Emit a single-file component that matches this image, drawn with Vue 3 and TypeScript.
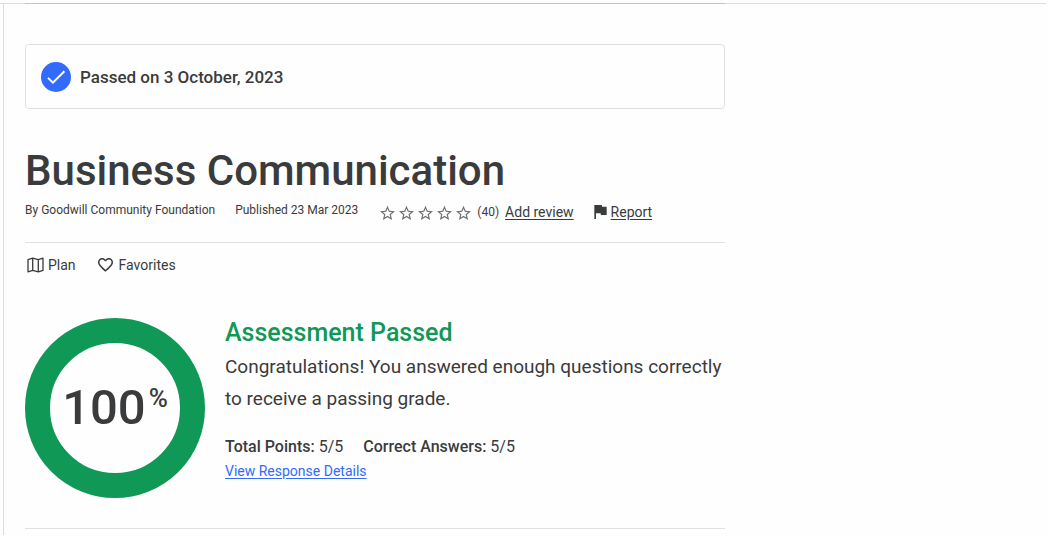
<script setup lang="ts">
interface Stat {
  label: string
  value: string
}

const score = 100
const ratingCount = 40
const stars = [1, 2, 3, 4, 5]
const stats: Stat[] = [
  { label: 'Total Points:', value: '5/5' },
  { label: 'Correct Answers:', value: '5/5' },
]
</script>

<template>
  <div class="page">
    <main class="panel">
      <div class="content">
        <section class="banner">
          <svg class="check" viewBox="0 0 30 30" aria-hidden="true">
            <circle cx="15" cy="15" r="15" fill="#326bfb" />
            <path d="M7 15.9 11.9 20.7 23.4 9.2" fill="none" stroke="#fff" stroke-width="2" />
          </svg>
          <span>Passed on 3 October, 2023</span>
        </section>

        <h1 class="title">Business Communication</h1>

        <div class="meta">
          <span class="small">By Goodwill Community Foundation</span>
          <span class="small">Published 23 Mar 2023</span>
          <div class="rating">
            <div class="stars" role="img" aria-label="Not rated yet">
              <svg v-for="s in stars" :key="s" class="star" viewBox="2 1 20 20" aria-hidden="true">
                <path
                  fill="#707173"
                  d="M22 9.24l-7.19-.62L12 2 9.19 8.63 2 9.24l5.46 4.73L5.82 21 12 17.27 18.18 21l-1.63-7.03L22 9.24zM12 15.4l-3.76 2.27 1-4.28-3.32-2.88 4.38-.38L12 6.1l1.71 4.04 4.38.38-3.32 2.88 1 4.28L12 15.4z"
                />
              </svg>
            </div>
            <span class="count">({{ ratingCount }})</span>
            <a class="link" href="#review">Add review</a>
          </div>
          <div class="report">
            <svg class="flag" viewBox="5 4 15 17" aria-hidden="true">
              <path fill="#3a3b3c" d="M14.4 6 14 4H5v17h2v-7h5.6l.4 2h7V6z" />
            </svg>
            <a class="link" href="#report">Report</a>
          </div>
        </div>

        <div class="actions">
          <button type="button" class="action plan">
            <svg class="map" viewBox="0 0 17 16" aria-hidden="true">
              <path
                d="M1 2.6 5.7 1.2 11.3 2.6 16 1.2V13.4L11.3 14.8 5.7 13.4 1 14.8ZM5.7 1.2V13.4M11.3 2.6V14.8"
                fill="none"
                stroke="#3a3b3c"
                stroke-width="1.3"
                stroke-linejoin="round"
              />
            </svg>
            <span>Plan</span>
          </button>
          <button type="button" class="action favorites">
            <svg class="heart" viewBox="2 3 20 18.4" aria-hidden="true">
              <path
                fill="#3a3b3c"
                d="M16.5 3c-1.74 0-3.41.81-4.5 2.09C10.91 3.81 9.24 3 7.5 3 4.42 3 2 5.42 2 8.5c0 3.78 3.4 6.86 8.55 11.54L12 21.35l1.45-1.32C18.6 15.36 22 12.28 22 8.5 22 5.42 19.58 3 16.5 3zm-4.4 15.55-.1.1-.1-.1C7.14 14.24 4 11.39 4 8.5 4 6.5 5.5 5 7.5 5c1.54 0 3.04.99 3.57 2.36h1.87C13.46 5.99 14.96 5 16.5 5c2 0 3.5 1.5 3.5 3.5 0 2.89-3.14 5.74-7.9 10.05z"
              />
            </svg>
            <span>Favorites</span>
          </button>
        </div>

        <section class="result">
          <div class="ring">
            <span class="score">{{ score }}</span>
            <span class="percent">%</span>
          </div>
          <div class="details">
            <h2 class="heading">Assessment Passed</h2>
            <p class="message">
              Congratulations! You answered enough questions correctly to receive a passing grade.
            </p>
            <div class="stats">
              <span v-for="stat in stats" :key="stat.label">
                <strong>{{ stat.label }}</strong> {{ stat.value }}
              </span>
            </div>
            <a class="response" href="#responses">View Response Details</a>
          </div>
        </section>
      </div>
    </main>
  </div>
</template>

<style>
body {
  margin: 0;
  background: #fefefe;
}
</style>

<style scoped>
.page {
  box-sizing: border-box;
  padding-top: 3px;
  margin-right: 2px;
  color: #3a3b3c;
  font-family: Roboto, "Liberation Sans", sans-serif;
  font-size: 14px;
  line-height: 20px;
}

.page::before {
  content: "";
  display: block;
  height: 1px;
  background: #dcdcdc;
}

.panel {
  margin-left: 3px;
  border-left: 1px solid #dcdcdc;
  padding: 0 21px;
  min-height: calc(100vh - 4px);
  box-sizing: border-box;
}

.content {
  max-width: 700px;
  margin-top: -1px;
  border-top: 1px solid #c4c4c4;
}

.banner {
  display: flex;
  align-items: center;
  gap: 9px;
  margin-top: 40px;
  padding: 17px 15px 16px;
  border: 1px solid #e0e0e0;
  border-radius: 4px;
  font-size: 17px;
  font-weight: 500;
}

.check {
  width: 30px;
  height: 30px;
}

.title {
  margin: 37px 0 0;
  font-size: 42px;
  line-height: 50px;
  font-weight: 500;
}

.meta {
  display: flex;
  align-items: center;
  gap: 20px;
  padding: 6px 0 20px;
  border-bottom: 1px solid #e0e0e0;
}

.small {
  font-size: 12px;
  line-height: 16px;
  padding-bottom: 4px;
}

.rating {
  display: flex;
  align-items: center;
  gap: 6px;
  margin-left: 2px;
}

.stars {
  display: flex;
  gap: 4px;
}

.star {
  width: 15px;
  height: 15px;
}

.count {
  font-size: 12px;
}

.link {
  color: inherit;
  text-underline-offset: 2px;
}

.report {
  display: flex;
  align-items: center;
  gap: 4px;
}

.flag {
  width: 13px;
  height: 14px;
}

.actions {
  display: flex;
  gap: 22px;
  padding: 12px 2px 0;
}

.action {
  display: flex;
  align-items: center;
  gap: 4px;
  padding: 0;
  border: 0;
  background: none;
  color: inherit;
  font: inherit;
  cursor: pointer;
}

.favorites {
  gap: 6px;
}

.map {
  width: 17px;
  height: 16px;
}

.heart {
  width: 15px;
  height: 14px;
}

.result {
  display: flex;
  gap: 20px;
  margin-top: 43px;
  padding-bottom: 30px;
  border-bottom: 1px solid #e0e0e0;
}

.ring {
  box-sizing: border-box;
  flex: none;
  display: flex;
  justify-content: center;
  align-items: center;
  gap: 3px;
  width: 180px;
  height: 180px;
  border: 25px solid #109856;
  border-radius: 50%;
}

.score {
  font-size: 49px;
  line-height: 56px;
  font-weight: 500;
}

.percent {
  padding-bottom: 20px;
  font-size: 26px;
  line-height: 30px;
  font-weight: 500;
}

.heading {
  margin: 0;
  color: #109856;
  font-size: 25px;
  line-height: 30px;
  font-weight: 500;
}

.message {
  margin: 3px 0 0;
  font-size: 19px;
  line-height: 32px;
}

.stats {
  display: flex;
  gap: 20px;
  margin-top: 20px;
  font-size: 16px;
  line-height: 24px;
}

.stats strong {
  font-weight: 500;
}

.response {
  display: inline-block;
  margin-top: 2px;
  color: #326bfb;
  text-underline-offset: 2px;
}
</style>
